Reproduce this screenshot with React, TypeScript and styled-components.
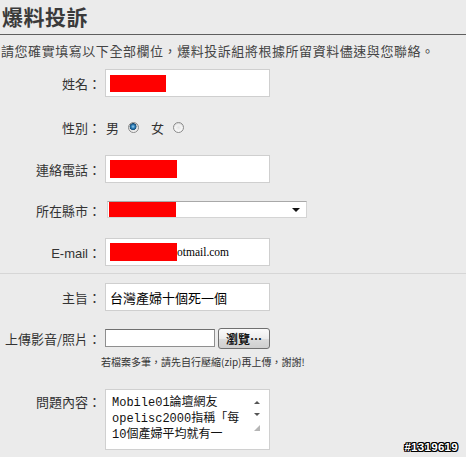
import styled, { createGlobalStyle } from "styled-components";

const GlobalStyle = createGlobalStyle`
    html, body {
        margin: 0;
        padding: 0;
        background: #ebebeb;
    }
    body {
        font-family: "Noto Sans CJK TC", "Liberation Sans", sans-serif;
        color: #333;
    }
`;

const cjk = `"Noto Sans CJK TC", "Liberation Sans", sans-serif`;

const Page = styled.div`
    position: relative;
    width: 466px;
    height: 457px;
    overflow: hidden;
    background: #ebebeb;
`;

const Title = styled.h1`
    margin: 0;
    padding-left: 2px;
    height: 34px;
    line-height: 33px;
    font-family: ${cjk};
    font-size: 21px;
    font-weight: 700;
    letter-spacing: 0.5px;
    color: #3a3a3a;
    border-bottom: 1px solid #5e5e5e;
`;

const Intro = styled.p`
    margin: 0;
    padding-left: 1px;
    height: 26px;
    line-height: 32px;
    font-family: ${cjk};
    font-size: 13px;
    letter-spacing: 0.55px;
    color: #444;
    white-space: nowrap;
`;

const Form = styled.div`
    display: flex;
    flex-direction: column;
`;

interface RowProps {
    $h: number;
    $top?: boolean;
}

const Row = styled.div<RowProps>`
    display: grid;
    grid-template-columns: 101px 1fr;
    column-gap: 4px;
    height: ${(p) => p.$h}px;
    align-items: ${(p) => (p.$top ? "start" : "center")};
`;

const Divider = styled.hr`
    margin: 0;
    border: 0;
    border-top: 1px solid #d6d6d6;
    height: 0;
`;

const Label = styled.label<{ $pad?: number }>`
    justify-self: end;
    padding-top: ${(p) => p.$pad ?? 0}px;
    font-family: ${cjk};
    font-size: 13px;
    color: #333;
    white-space: nowrap;
`;

const Latin = styled.span`
    font-family: "Liberation Sans", sans-serif;
    font-size: 13px;
`;

const TextBox = styled.div`
    box-sizing: border-box;
    display: flex;
    align-items: center;
    width: 165px;
    height: 28px;
    padding-left: 4px;
    background: #fff;
    border: 1px solid #cfcfcf;
    font-family: ${cjk};
    font-size: 13px;
    color: #000;
    white-space: nowrap;
    overflow: hidden;
`;

const Redact = styled.span<{ $w: number; $h: number }>`
    display: inline-block;
    flex: none;
    width: ${(p) => p.$w}px;
    height: ${(p) => p.$h}px;
    background: #ff0000;
`;

const SerifText = styled.span`
    font-family: "Liberation Serif", serif;
    font-size: 11.5px;
    color: #000;
`;

const Options = styled.div`
    display: flex;
    align-items: center;
    padding-left: 1px;
    font-family: ${cjk};
    font-size: 13px;
    color: #333;
`;

const Choice = styled.span`
    margin-right: 9px;
`;

const Radio = styled.span<{ $checked?: boolean }>`
    box-sizing: border-box;
    display: inline-block;
    width: 11px;
    height: 11px;
    margin-right: 12px;
    border-radius: 50%;
    border: 1px solid #8a8a8a;
    background: ${(p) =>
        p.$checked
            ? "radial-gradient(circle at 45% 40%, #9fd2f2 0, #2f7fb8 1.8px, #17507e 3.2px, #e2e2e2 3.7px, #fdfdfd 6px)"
            : "radial-gradient(circle at 50% 50%, #e4e4e4 0, #f4f4f4 3px, #fdfdfd 5px)"};
    box-shadow: inset 0 1px 1px rgba(0, 0, 0, 0.15);
`;

const Select = styled.div`
    box-sizing: border-box;
    display: flex;
    align-items: stretch;
    justify-content: space-between;
    width: 200px;
    height: 17px;
    margin-left: 2px;
    margin-top: -1px;
    padding-left: 1px;
    background: #fff;
    border: 1px solid #d4d4d4;
    border-top-color: #a8a8a8;
`;

const Caret = styled.span`
    align-self: center;
    width: 0;
    height: 0;
    margin-right: 6px;
    border-left: 4px solid transparent;
    border-right: 4px solid transparent;
    border-top: 4px solid #111;
`;

const FileRow = styled.div`
    display: flex;
    align-items: center;
    gap: 3px;
`;

const FileBox = styled.div`
    box-sizing: border-box;
    width: 110px;
    height: 18px;
    background: #fff;
    border: 1px solid #8f8f8f;
    border-top-color: #6f6f6f;
`;

const BrowseButton = styled.button`
    box-sizing: border-box;
    width: 52px;
    height: 21px;
    padding: 0;
    border: 1px solid #707070;
    border-radius: 3px;
    background: linear-gradient(#fbfbfb, #ececec 50%, #dcdcdc 51%, #cfcfcf);
    font-family: ${cjk};
    font-size: 12px;
    font-weight: 700;
    color: #111;
    line-height: 19px;
`;

const Note = styled.div`
    grid-column: 2;
    margin-left: -4px;
    font-family: ${cjk};
    font-size: 10px;
    line-height: 12px;
    color: #333;
    white-space: nowrap;
`;

const TextArea = styled.div`
    box-sizing: border-box;
    display: flex;
    width: 165px;
    height: 61px;
    padding: 5px 0 0 6px;
    background: #fff;
    border: 1px solid #d0d0d0;
`;

const AreaText = styled.div`
    flex: 1;
    font-family: "Liberation Mono", "Noto Sans CJK TC", monospace;
    font-size: 12px;
    line-height: 16px;
    color: #111;
    white-space: nowrap;
    overflow: hidden;
`;

const ScrollBar = styled.div`
    display: flex;
    flex-direction: column;
    align-items: center;
    width: 16px;
    margin-right: 4px;
    padding-top: 6px;
    gap: 9px;
`;

const Arrow = styled.span<{ $down?: boolean }>`
    width: 0;
    height: 0;
    border-left: 3px solid transparent;
    border-right: 3px solid transparent;
    ${(p) => (p.$down ? "border-top: 3px solid #555;" : "border-bottom: 3px solid #555;")}
`;

const Grip = styled.span`
    width: 6px;
    height: 6px;
    background:
        radial-gradient(circle, #b0b0b0 0.7px, transparent 0.8px) 0 0 / 2px 2px;
    clip-path: polygon(100% 0, 100% 100%, 0 100%);
`;

const Watermark = styled.div`
    position: absolute;
    right: 8px;
    bottom: 4px;
    font-family: "Liberation Sans", sans-serif;
    font-size: 11.5px;
    font-weight: 700;
    color: #fff;
    letter-spacing: 0.3px;
    text-shadow: -1px 0 #000, 1px 0 #000, 0 -1px #000, 0 1px #000, -1px -1px #000, 1px 1px #000, -1px 1px #000, 1px -1px #000;
`;

function App(): JSX.Element {
    return (
        <Page>
            <GlobalStyle />
            <Title>爆料投訴</Title>
            <Intro>請您確實填寫以下全部欄位，爆料投訴組將根據所留資料儘速與您聯絡。</Intro>
            <Form>
                <Row $h={44}>
                    <Label>姓名：</Label>
                    <TextBox>
                        <Redact $w={56} $h={17} />
                    </TextBox>
                </Row>
                <Row $h={44}>
                    <Label>性別：</Label>
                    <Options>
                        <Choice>男</Choice>
                        <Radio $checked />
                        <Choice>女</Choice>
                        <Radio />
                    </Options>
                </Row>
                <Row $h={40}>
                    <Label>連絡電話：</Label>
                    <TextBox>
                        <Redact $w={67} $h={18} />
                    </TextBox>
                </Row>
                <Row $h={42}>
                    <Label>所在縣市：</Label>
                    <Select>
                        <Redact $w={67} $h={15} />
                        <Caret />
                    </Select>
                </Row>
                <Row $h={42}>
                    <Label>
                        <Latin>E-mail</Latin>：
                    </Label>
                    <TextBox>
                        <Redact $w={67} $h={18} />
                        <SerifText>otmail.com</SerifText>
                    </TextBox>
                </Row>
                <Divider />
                <Row $h={46}>
                    <Label>主旨：</Label>
                    <TextBox>台灣產婦十個死一個</TextBox>
                </Row>
                <Row $h={36}>
                    <Label>上傳影音/照片：</Label>
                    <FileRow>
                        <FileBox />
                        <BrowseButton>瀏覽…</BrowseButton>
                    </FileRow>
                </Row>
                <Row $h={33} $top>
                    <Note>若檔案多筆，請先自行壓縮(zip)再上傳，謝謝!</Note>
                </Row>
                <Row $h={70} $top>
                    <Label $pad={3}>問題內容：</Label>
                    <TextArea>
                        <AreaText>
                            Mobile01論壇網友
                            <br />
                            opelisc2000指稱「每
                            <br />
                            10個產婦平均就有一
                        </AreaText>
                        <ScrollBar>
                            <Arrow />
                            <Arrow $down />
                            <Grip />
                        </ScrollBar>
                    </TextArea>
                </Row>
            </Form>
            <Watermark>#1319619</Watermark>
        </Page>
    );
}

export default App;
